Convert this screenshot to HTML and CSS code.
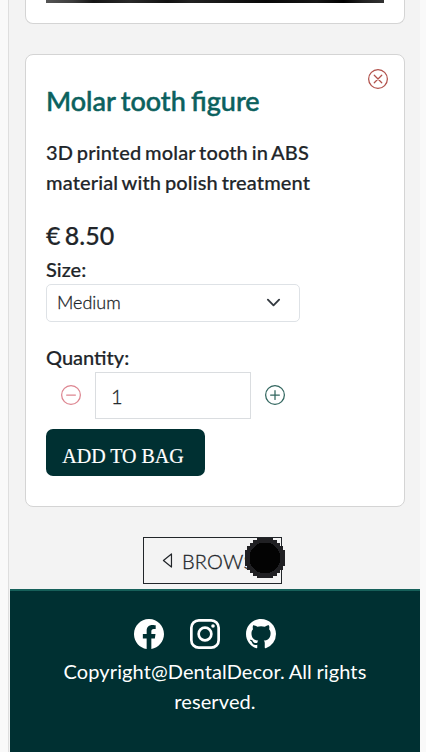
FILE: index.html
```html
<!DOCTYPE html>
<html lang="en">
<head>
<meta charset="utf-8">
<title>Dental Decor</title>
<link rel="stylesheet" href="styles.css">
</head>
<body>
<div class="page">
  <main class="products">
    <article class="card card-previous"><div class="card-image"></div></article>
    <article class="card">
      <button class="icon-button remove" aria-label="Remove">
        <svg viewBox="0 0 16 16" fill="none" stroke="currentColor"><circle cx="8" cy="8" r="7.5"/><path d="m5 5 6 6M11 5l-6 6" stroke-linecap="round"/></svg>
      </button>
      <h3 class="title">Molar tooth figure</h3>
      <p class="description">3D printed molar tooth in ABS material with polish treatment</p>
      <p class="price">€ 8.50</p>
      <p class="label">Size:</p>
      <div class="select"><span>Medium</span>
        <svg viewBox="0 0 16 16" fill="none" stroke="#343a40" stroke-width="2" stroke-linecap="round" stroke-linejoin="round"><path d="m2 5 6 6 6-6"/></svg>
      </div>
      <p class="label label-quantity">Quantity:</p>
      <div class="quantity">
        <button class="icon-button minus" aria-label="Decrease"><svg viewBox="0 0 16 16" fill="none" stroke="currentColor"><circle cx="8" cy="8" r="7.5"/><path d="M4.5 8h7" stroke-linecap="round"/></svg></button>
        <div class="quantity-input">1</div>
        <button class="icon-button plus" aria-label="Increase"><svg viewBox="0 0 16 16" fill="none" stroke="currentColor"><circle cx="8" cy="8" r="7.5"/><path d="M4.5 8h7M8 4.5v7" stroke-linecap="round"/></svg></button>
      </div>
      <button class="add">ADD TO BAG</button>
    </article>
    <div class="browse">
      <svg class="caret" viewBox="0 0 16 16" fill="none" stroke="currentColor" stroke-linejoin="round"><path d="M10.5 2.5v11L3.7 8z"/></svg>
      <span>BROWSE</span>
      <svg class="pointer" viewBox="0 0 40 40" shape-rendering="crispEdges"><path fill="#202023" d="M12 0h16v2h4v3h3v3h3v4h2v16h-2v4h-3v3h-3v3h-4v2H12v-2H8v-3H5v-3H2v-4H0V12h2V8h3V5h3V2h4z"/><circle cx="20" cy="20" r="15.5" fill="#030303"/></svg>
    </div>
  </main>
  <footer class="footer">
    <div class="social">
      <svg viewBox="0 0 16 16" fill="currentColor"><path d="M16 8.049c0-4.446-3.582-8.05-8-8.05C3.58 0-.002 3.603-.002 8.05c0 4.017 2.926 7.347 6.75 7.951v-5.625h-2.03V8.05H6.75V6.275c0-2.017 1.195-3.131 3.022-3.131.876 0 1.791.157 1.791.157v1.98h-1.009c-.993 0-1.303.621-1.303 1.258v1.51h2.218l-.354 2.326H9.25V16c3.824-.604 6.75-3.934 6.75-7.951z"/></svg>
      <svg viewBox="0 0 16 16" fill="none" stroke="currentColor" stroke-width="1.44"><rect x=".72" y=".72" width="14.56" height="14.56" rx="4"/><circle cx="8" cy="8" r="3.39"/><circle cx="12.27" cy="3.73" r=".96" fill="currentColor" stroke="none"/></svg>
      <svg viewBox="0 0 16 16" fill="currentColor"><path d="M8 0C3.58 0 0 3.58 0 8c0 3.54 2.29 6.53 5.47 7.59.4.07.55-.17.55-.38 0-.19-.01-.82-.01-1.49-2.01.37-2.53-.49-2.69-.94-.09-.23-.48-.94-.82-1.13-.28-.15-.68-.52-.01-.53.63-.01 1.08.58 1.23.82.72 1.21 1.87.87 2.33.66.07-.52.28-.87.51-1.07-1.78-.2-3.64-.89-3.64-3.95 0-.87.31-1.59.82-2.15-.08-.2-.36-1.02.08-2.12 0 0 .67-.21 2.2.82.64-.18 1.32-.27 2-.27.68 0 1.36.09 2 .27 1.53-1.04 2.2-.82 2.2-.82.44 1.1.16 1.92.08 2.12.51.56.82 1.27.82 2.15 0 3.07-1.87 3.75-3.65 3.95.29.25.54.73.54 1.48 0 1.07-.01 1.93-.01 2.2 0 .21.15.46.55.38A8.012 8.012 0 0 0 16 8c0-4.42-3.58-8-8-8z"/></svg>
    </div>
    <p class="copyright">Copyright@DentalDecor. All rights reserved.</p>
  </footer>
</div>
</body>
</html>
```
FILE: styles.css
```css
* { box-sizing: border-box; }
html, body { height: 100%; }
body {
  margin: 0;
  padding: 0 6px 0 8px;
  overflow: hidden;
  background: #f9f9f9;
  color: #212529;
  font: 400 20px/30px Lato, sans-serif;
}
p, h3 { margin: 0; }
button { font: inherit; cursor: pointer; }
svg { display: block; flex: none; }
.page {
  display: flex;
  flex-direction: column;
  height: 752px;
  border-left: 1px solid #dedede;
  padding-left: 1px;
  background: #f3f3f3;
}
.products {
  display: flex;
  flex-direction: column;
  height: 589px;
  padding: 0 15px;
}
.card {
  position: relative;
  height: 453px;
  padding: 30px 20px 0;
  background: #fff;
  border: 1px solid #d4d4d4;
  border-radius: 8px;
}
.card-previous {
  height: 24px;
  margin-bottom: 30px;
  padding-top: 0;
  border-top: 0;
  border-radius: 0 0 8px 8px;
}
.card-image {
  height: 3px;
  background: linear-gradient(90deg, #555 0, #3c3c3c 8%, #151515 14%, #292929 25%, #111 36%, #222 43%, #080808 65%, #151515 80%, #000 88%, #222 94%, #333);
}
.icon-button {
  width: 20px;
  height: 20px;
  padding: 0;
  border: 0;
  background: none;
}
.icon-button svg { width: 20px; height: 20px; }
.remove {
  position: absolute;
  top: 14px;
  right: 16px;
  color: #b1514b;
}
.title {
  color: #0b615e;
  font-size: 27px;
  font-weight: 500;
  line-height: 32px;
  word-spacing: -1.5px;
  -webkit-text-stroke: .5px currentColor;
}
.description {
  margin-top: 20px;
  font-weight: 500;
  letter-spacing: .13px;
  word-spacing: -1.4px;
  -webkit-text-stroke: .2px currentColor;
}
.price {
  margin-top: 23px;
  font-size: 25px;
  font-weight: 500;
  line-height: 30px;
  word-spacing: -2px;
  -webkit-text-stroke: .2px currentColor;
}
.label {
  margin-top: 4px;
  font-weight: 500;
  -webkit-text-stroke: .2px currentColor;
}
.select {
  display: flex;
  align-items: center;
  justify-content: space-between;
  width: 254px;
  height: 38px;
  padding: 0 18px 2px 10px;
  border: 1px solid #dee2e6;
  border-radius: 5px;
  font-size: 18px;
  font-weight: 300;
  -webkit-text-stroke: .3px currentColor;
}
.select svg { width: 15px; height: 15px; }
.label-quantity { margin-top: 20px; }
.quantity {
  display: flex;
  align-items: center;
  height: 47px;
  padding-left: 15px;
}
.icon-button.minus, .icon-button.plus { margin-top: -2px; }
.quantity-input {
  width: 156px;
  height: 47px;
  margin: 0 14px;
  padding: 8px 15px;
  border: 1px solid #dadde0;
  line-height: 30px;
  font-weight: 300;
  -webkit-text-stroke: .3px currentColor;
}
.minus { color: #dd8590; }
.plus { color: #32665f; }
.add {
  width: 159px;
  height: 47px;
  margin-top: 10px;
  padding: 6px 5px 0 0;
  border: 0;
  border-radius: 7px;
  background: #003032;
  color: #fff;
  font: 20px/30px "Liberation Serif", serif;
  -webkit-text-stroke: .2px currentColor;
}
.browse {
  position: relative;
  align-self: center;
  display: flex;
  align-items: center;
  width: 139px;
  height: 47px;
  margin: 30px 5px 0 0;
  padding: 1px 0 0 15px;
  border: 1px solid #212529;
  font-weight: 300;
}
.browse span { letter-spacing: .2px; -webkit-text-stroke: .3px currentColor; }
.caret { width: 19px; height: 19px; margin: 0 4px 1px 0; }
.pointer {
  position: absolute;
  left: 101px;
  top: 0;
  width: 40px;
  height: 40px;
}
.footer {
  flex: 1;
  padding: 28px 40px 0;
  border-top: 2px solid #16605a;
  background: #003032;
  color: #fff;
  text-align: center;
}
.social {
  display: flex;
  justify-content: center;
  gap: 26px;
  margin-right: 20px;
}
.social svg { width: 30px; height: 30px; }
.copyright { margin-top: 7px; letter-spacing: .1px; word-spacing: -.7px; }
```
